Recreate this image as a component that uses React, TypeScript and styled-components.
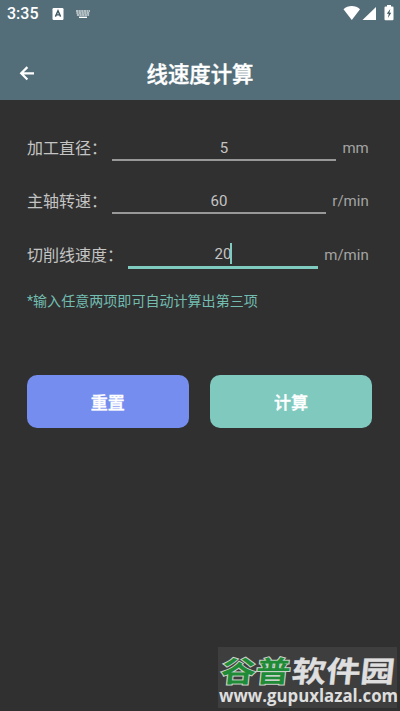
import React from "react";
import styled, { createGlobalStyle } from "styled-components";

const GlobalStyle = createGlobalStyle`
  * { box-sizing: border-box; }
  body {
    margin: 0;
    background: #303030;
    font-family: Roboto, "Noto Sans CJK SC", sans-serif;
  }
`;

const Screen = styled.main`
  display: flex;
  flex-direction: column;
  position: relative;
  width: 400px;
  height: 711px;
  overflow: hidden;
  background: #303030;
`;

const Header = styled.header`
  height: 100px;
  background: #546e79;
  color: #fff;
`;

const StatusBar = styled.div`
  display: flex;
  align-items: center;
  height: 28px;
  padding: 0 5px 0 7px;
`;

const Clock = styled.span`
  width: 45px;
  font-size: 16px;
  font-weight: 500;
  line-height: 28px;
`;

const StatusIcon = styled.svg<{ $gap?: number }>`
  display: block;
  flex: none;
  margin-left: ${(p) => p.$gap ?? 0}px;
`;

const Spacer = styled.div`
  flex: 1;
`;

const TitleBar = styled.div`
  display: grid;
  grid-template-columns: 54px 1fr 54px;
  align-items: center;
  height: 53px;
  margin-top: 19px;
`;

const BackButton = styled.button`
  display: flex;
  justify-content: center;
  padding: 0;
  border: 0;
  background: none;
  color: inherit;
`;

const Title = styled.h1`
  margin: 2px 0 0;
  font-size: 21.4px;
  font-weight: 500;
  line-height: 32px;
  text-align: center;
  -webkit-text-stroke: 0.4px #fff;
`;

const Form = styled.section`
  display: flex;
  flex-direction: column;
  padding: 21px 31px 0 27px;
`;

const Row = styled.label`
  display: flex;
  align-items: flex-start;
  height: 53.3px;
`;

const Label = styled.span`
  flex: none;
  margin-right: 5px;
  font-size: 16px;
  line-height: 55px;
  color: #c4c4c4;
`;

const Field = styled.span<{ $active?: boolean }>`
  display: flex;
  flex: 1;
  justify-content: center;
  align-items: center;
  height: ${(p) => (p.$active ? 41 : 40)}px;
  padding-top: 15px;
  border-bottom: ${(p) => (p.$active ? "3px solid #80cbc0" : "2px solid #989898")};
  font-size: 15px;
  color: #c4c4c4;
`;

const Value = styled.span`
  position: relative;
  line-height: 20px;
`;

const Caret = styled.i`
  position: absolute;
  left: 100%;
  top: -1px;
  width: 2px;
  height: 21px;
  margin-left: -1px;
  background: #80cbc0;
`;

const Unit = styled.span`
  margin-left: 6.5px;
  margin-right: 0.3px;
  font-size: 15px;
  line-height: 54px;
  color: #a4a4a4;
`;

const Hint = styled.p`
  margin: 10px 0 0;
  font-size: 14.05px;
  line-height: 21px;
  color: #72bdb0;
`;

const Actions = styled.div`
  display: grid;
  grid-template-columns: 162px 162px;
  column-gap: 21.4px;
  padding: 63px 27px 0 26.7px;
`;

const ActionButton = styled.button<{ $color: string }>`
  height: 53px;
  padding: 0;
  border: 0;
  border-radius: 10px;
  background: ${(p) => p.$color};
  color: #fff;
  font-family: inherit;
  font-size: 17px;
  font-weight: 500;
  -webkit-text-stroke: 0.4px #fff;
`;

const Watermark = styled.svg`
  position: absolute;
  left: 218px;
  top: 647px;
`;

const fields = [
  { label: "加工直径：", value: "5", unit: "mm" },
  { label: "主轴转速：", value: "60", unit: "r/min" },
  { label: "切削线速度：", value: "20", unit: "m/min", active: true },
];

function KeyboardIcon() {
  return (
    <StatusIcon $gap={12} width="14" height="9" viewBox="0 0 14 9">
      <path
        d="M0 1h14M.4 3h13.2M.9 5h12.2"
        stroke="#fff"
        strokeOpacity=".75"
        strokeWidth="1.5"
        strokeDasharray="2.200 .4"
      />
      <path d="M3 7.300h8" stroke="#fff" strokeWidth="1.400" />
    </StatusIcon>
  );
}

export default function App() {
  return (
    <>
      <GlobalStyle />
      <Screen>
        <Header>
          <StatusBar>
            <Clock>3:35</Clock>
            <StatusIcon width="12" height="12" viewBox="0 0 12 12">
              <rect x=".5" y="0" width="11" height="12" rx="1.2" fill="#fff" />
              <path d="M3.400 8.600 6 2.800l2.600 5.800M4.300 6.900h3.400" fill="none" stroke="#3e5660" strokeWidth="1.400" />
            </StatusIcon>
            <KeyboardIcon />
            <Spacer />
            <StatusIcon width="18" height="16" viewBox="0 0 18 16">
              <path d="M.5 3.200C5-1 12.500-1 17 3.200L8.800 13.900Z" fill="#fff" />
            </StatusIcon>
            <StatusIcon $gap={1} width="15" height="14" viewBox="0 0 15 14">
              <path d="M14 0v13H.5Z" fill="#fff" />
            </StatusIcon>
            <StatusIcon $gap={7} width="11" height="18" viewBox="0 0 11 18">
              <path d="M3 0h4v1.500h1.500q1 0 1 1V14.200q0 1-1 1h-7q-1 0-1-1V2.500q0-1 1-1H3Z" fill="#fff" />
              <path d="M6.300 4 2.800 8.700h2L3.900 12.900 7.300 7.700H5.400Z" fill="#3e5660" />
            </StatusIcon>
          </StatusBar>
          <TitleBar>
            <BackButton aria-label="返回">
              <svg width="16" height="16" viewBox="0 0 16 16" fill="none" stroke="#fff" strokeWidth="2.200">
                <path d="M15 7.300H2.200M8.400 1.100 2.200 7.300l6.200 6.200" />
              </svg>
            </BackButton>
            <Title>线速度计算</Title>
          </TitleBar>
        </Header>
        <Form>
          {fields.map((f) => (
            <Row key={f.label}>
              <Label>{f.label}</Label>
              <Field $active={f.active}>
                <Value>
                  {f.value}
                  {f.active && <Caret />}
                </Value>
              </Field>
              <Unit>{f.unit}</Unit>
            </Row>
          ))}
          <Hint>*输入任意两项即可自动计算出第三项</Hint>
        </Form>
        <Actions>
          <ActionButton $color="#748dee">重置</ActionButton>
          <ActionButton $color="#7fc9bf">计算</ActionButton>
        </Actions>
        <Watermark width="182" height="64" viewBox="0 0 182 64">
          <rect width="179" height="61" fill="#3e3e3e" />
          <g fontFamily="Noto Sans CJK SC, sans-serif" fontWeight="700" fontSize="29">
            <text
              transform="translate(2 35) skewX(-6) scale(1.200 1)"
              fill="#208b36"
              stroke="#c9d2c9"
              strokeWidth="2"
              paintOrder="stroke"
            >
              谷普
            </text>
            <text
              transform="translate(73 35) skewX(-6) scale(1.180 1)"
              fill="#dfdfdf"
              stroke="#dfdfdf"
              strokeWidth=".4"
            >
              软件园
            </text>
          </g>
          <text
            transform="translate(1 55) scale(.935 1)"
            fill="#dedede"
            fontFamily="Open Sans, sans-serif"
            fontWeight="700"
            fontSize="18"
          >
            www.gupuxlazal.com
          </text>
        </Watermark>
      </Screen>
    </>
  );
}
